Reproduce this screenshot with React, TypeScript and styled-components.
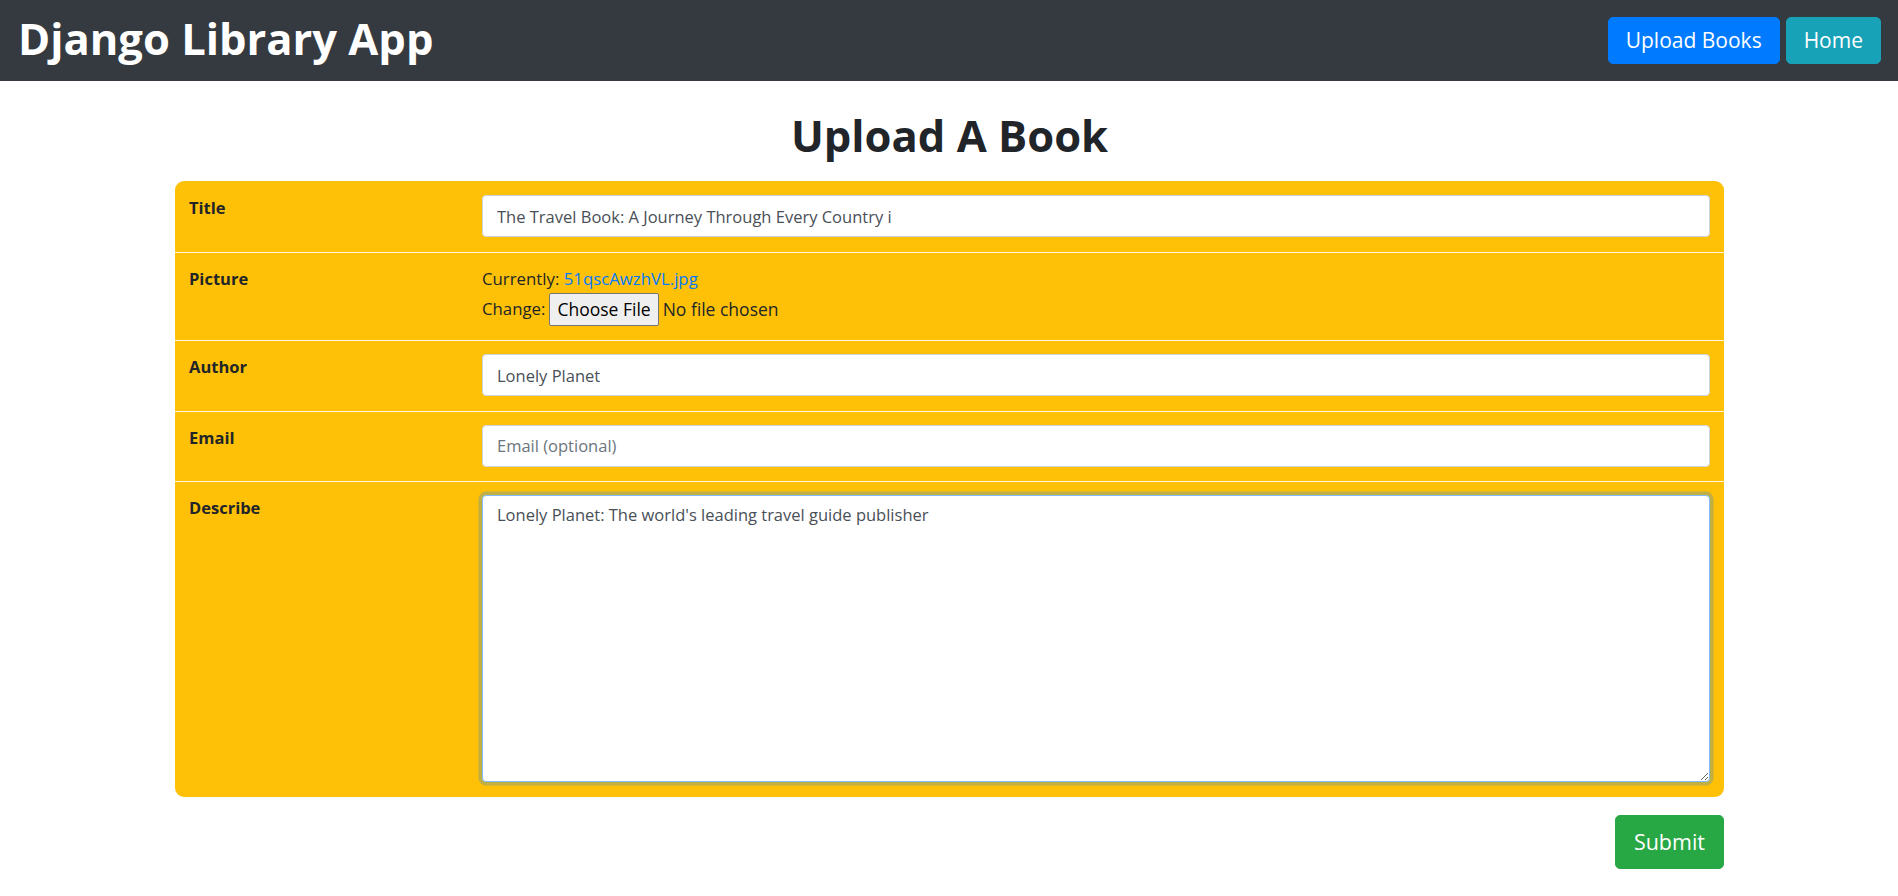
import { useEffect, useRef } from 'react'
import styled, { createGlobalStyle } from 'styled-components'

const GlobalStyle = createGlobalStyle`
  body {
    margin: 0;
    background: #fff;
    color: #212529;
    font-family: 'Open Sans', 'Noto Sans', sans-serif;
  }
`

const Navbar = styled.nav`
  display: flex;
  align-items: center;
  justify-content: space-between;
  height: 81px;
  padding: 0 17px 0 18px;
  box-sizing: border-box;
  background: #343a40;
`

const Brand = styled.h1`
  margin: 0 0 2px;
  font-size: 43.5px;
  font-weight: 700;
  line-height: 1.2;
  color: #fff;
`

const NavActions = styled.div`
  display: flex;
  gap: 6px;
`

const NavButton = styled.a<{ $color: string }>`
  display: inline-block;
  padding: 6px 17px;
  border: 1px solid ${(props) => props.$color};
  border-radius: 5px;
  background: ${(props) => props.$color};
  color: #fff;
  font-size: 21px;
  line-height: 33px;
  text-decoration: none;
  cursor: pointer;
`

const Main = styled.main`
  width: 1549px;
  margin: 0 auto;
  padding-left: 1px;
`

const PageTitle = styled.h1`
  margin: 29px 0 19px;
  font-size: 43.5px;
  font-weight: 700;
  line-height: 1.2;
  text-align: center;
  color: #212529;
`

const FormCard = styled.div`
  background: #ffc107;
  border-radius: 9px;
  overflow: hidden;
`

const FieldRow = styled.div`
  display: grid;
  grid-template-columns: 294px 1fr;
  border-top: 1px solid #fff8de;

  &:first-child {
    border-top-color: transparent;
  }
`

const LabelCell = styled.label`
  padding: 13px 13px 14px 14px;
  font-size: 16.5px;
  font-weight: 700;
  line-height: 26px;
  color: #212529;
`

const FieldCell = styled.div`
  padding: 13px 14px 14.5px 13px;
  font-size: 16.8px;
  line-height: 26px;
  color: #212529;
`

const TextInput = styled.input`
  display: block;
  width: 100%;
  height: 42px;
  box-sizing: border-box;
  padding: 0 14px;
  border: 1px solid #ced4da;
  border-radius: 4px;
  background: #fff;
  color: #495057;
  font-family: inherit;
  font-size: 16.5px;
  outline: none;

  &::placeholder {
    color: #6c757d;
  }
`

const TextArea = styled.textarea`
  display: block;
  width: 100%;
  height: 287px;
  box-sizing: border-box;
  padding: 6px 14px;
  border: 1px solid #80bdff;
  border-radius: 4px;
  background: #fff;
  color: #495057;
  font-family: inherit;
  font-size: 16.5px;
  line-height: 26px;
  box-shadow: 0 0 0 3.5px rgba(0, 123, 255, 0.25);
  outline: none;
  resize: vertical;
  caret-color: #000;
`

const FileLine = styled.div`
  display: flex;
  align-items: center;
  gap: 4px;
  margin-top: 1px;
`

const FileLink = styled.a`
  color: #007bff;
  text-decoration: none;
`

const FileButton = styled.button`
  height: 33px;
  padding: 0 7px;
  border: 1px solid #767676;
  border-radius: 2px;
  background: #efefef;
  color: #000;
  font-family: inherit;
  font-size: 17.5px;
  cursor: pointer;
`

const NoFile = styled.span`
  font-size: 17.5px;
`

const Actions = styled.div`
  display: flex;
  justify-content: flex-end;
  margin-top: 18px;
`

const SubmitButton = styled.button`
  padding: 9px 18px;
  border: 1px solid #28a745;
  border-radius: 5px;
  background: #28a745;
  color: #fff;
  font-family: inherit;
  font-size: 21.5px;
  line-height: 34px;
  cursor: pointer;
`

const description = "Lonely Planet: The world's leading travel guide publisher"

function App(): JSX.Element {
  const areaRef = useRef<HTMLTextAreaElement>(null)

  useEffect(() => {
    const el = areaRef.current
    if (el) {
      el.focus()
      el.setSelectionRange(el.value.length, el.value.length)
    }
  }, [])

  return (
    <>
      <GlobalStyle />
      <Navbar>
        <Brand>Django Library App</Brand>
        <NavActions>
          <NavButton $color="#007bff">Upload Books</NavButton>
          <NavButton $color="#17a2b8">Home</NavButton>
        </NavActions>
      </Navbar>
      <Main>
        <PageTitle>Upload A Book</PageTitle>
        <form onSubmit={(e) => e.preventDefault()}>
          <FormCard>
            <FieldRow>
              <LabelCell htmlFor="id_title">Title</LabelCell>
              <FieldCell>
                <TextInput
                  id="id_title"
                  defaultValue="The Travel Book: A Journey Through Every Country i"
                />
              </FieldCell>
            </FieldRow>
            <FieldRow>
              <LabelCell>Picture</LabelCell>
              <FieldCell>
                <div>
                  Currently: <FileLink href="#">51qscAwzhVL.jpg</FileLink>
                </div>
                <FileLine>
                  Change:
                  <FileButton type="button">Choose File</FileButton>
                  <NoFile>No file chosen</NoFile>
                </FileLine>
              </FieldCell>
            </FieldRow>
            <FieldRow>
              <LabelCell htmlFor="id_author">Author</LabelCell>
              <FieldCell>
                <TextInput id="id_author" defaultValue="Lonely Planet" />
              </FieldCell>
            </FieldRow>
            <FieldRow>
              <LabelCell htmlFor="id_email">Email</LabelCell>
              <FieldCell>
                <TextInput id="id_email" placeholder="Email (optional)" />
              </FieldCell>
            </FieldRow>
            <FieldRow>
              <LabelCell htmlFor="id_describe">Describe</LabelCell>
              <FieldCell>
                <TextArea id="id_describe" ref={areaRef} defaultValue={description} />
              </FieldCell>
            </FieldRow>
          </FormCard>
          <Actions>
            <SubmitButton type="submit">Submit</SubmitButton>
          </Actions>
        </form>
      </Main>
    </>
  )
}

export default App
